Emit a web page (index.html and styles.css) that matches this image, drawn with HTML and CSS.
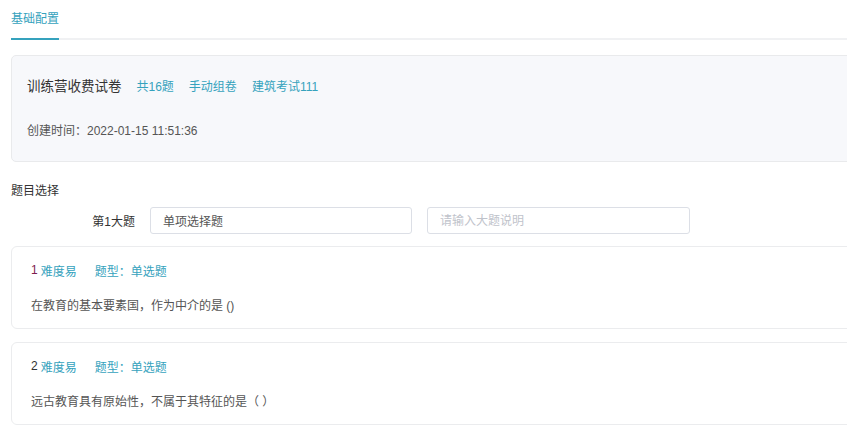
FILE: index.html
```html
<!DOCTYPE html>
<html lang="zh">
<head>
<meta charset="utf-8">
<link rel="stylesheet" href="styles.css">
</head>
<body>
<div class="page">
  <div class="tabs">
    <div class="tab active">基础配置</div>
  </div>

  <div class="info-card">
    <div class="info-title">
      <span class="paper-name">训练营收费试卷</span>
      <span class="tag">共16题</span>
      <span class="tag">手动组卷</span>
      <span class="tag">建筑考试111</span>
    </div>
    <div class="info-time">创建时间：2022-01-15 11:51:36</div>
  </div>

  <div class="section-title">题目选择</div>

  <div class="part-row">
    <div class="part-label">第1大题</div>
    <input class="part-input" type="text" value="单项选择题">
    <input class="part-input second" type="text" placeholder="请输入大题说明">
  </div>

  <div class="q-card">
    <div class="q-meta">
      <span class="q-num red">1</span>
      <span class="q-level">难度易</span>
      <span class="q-type">题型：单选题</span>
    </div>
    <div class="q-text">在教育的基本要素国，作为中介的是 ()</div>
  </div>

  <div class="q-card">
    <div class="q-meta">
      <span class="q-num">2</span>
      <span class="q-level">难度易</span>
      <span class="q-type">题型：单选题</span>
    </div>
    <div class="q-text">远古教育具有原始性，不属于其特征的是（ ）</div>
  </div>
</div>
</body>
</html>
```

FILE: styles.css
```css
html, body {
  margin: 0;
  padding: 0;
  background: #fff;
  overflow: hidden;
}
body {
  font-family: "Liberation Sans", "Noto Sans CJK SC", sans-serif;
  color: #333;
}
.page {
  padding-left: 11px;
  width: 900px;
}
.tabs {
  display: flex;
  height: 38px;
  border-bottom: 2px solid #f0f1f3;
}
.tab {
  font-size: 12px;
  line-height: 38px;
  color: #35a2bd;
  margin-bottom: -2px;
}
.tab.active {
  border-bottom: 2px solid #35a2bd;
  line-height: 38px;
  height: 38px;
}
.info-card {
  margin-top: 15px;
  height: 105px;
  background: #f7f8fb;
  border: 1px solid #e9eaec;
  border-radius: 5px;
  padding: 0 15px;
}
.info-title {
  display: flex;
  align-items: center;
  height: 24px;
  margin-top: 17px;
}
.paper-name {
  font-size: 13.5px;
  color: #333;
  margin-right: 15px;
}
.tag {
  font-size: 12px;
  color: #35a2bd;
  margin-right: 15px;
}
.info-time {
  margin-top: 24px;
  font-size: 12px;
  line-height: 20px;
  color: #555;
}
.section-title {
  margin-top: 19px;
  font-size: 12px;
  line-height: 20px;
  color: #333;
}
.part-row {
  display: flex;
  align-items: center;
  margin-top: 6px;
}
.part-label {
  width: 124px;
  text-align: right;
  font-size: 12px;
  color: #333;
  margin-right: 15px;
}
.part-input {
  box-sizing: border-box;
  width: 262px;
  height: 27px;
  border: 1px solid #dcdfe6;
  border-radius: 3px;
  padding: 0 12px;
  font-family: "Liberation Sans", "Noto Sans CJK SC", sans-serif;
  font-size: 12px;
  color: #555;
  outline: none;
  background: #fff;
}
.part-input.second {
  margin-left: 15px;
  width: 263px;
}
.part-input::placeholder {
  color: #bfc3cb;
}
.q-card {
  box-sizing: border-box;
  height: 83px;
  border: 1px solid #ebecee;
  border-radius: 6px;
  padding: 0 19px;
  margin-top: 12px;
}
.q-card + .q-card {
  margin-top: 13px;
}
.q-meta {
  display: flex;
  align-items: center;
  height: 20px;
  margin-top: 13px;
  font-size: 12px;
}
.q-num {
  color: #333;
  margin-right: 3px;
}
.q-num.red {
  color: #7d1d4f;
}
.q-level {
  color: #35a2bd;
  margin-right: 18px;
}
.q-type {
  color: #35a2bd;
}
.q-text {
  margin-top: 16px;
  font-size: 12px;
  line-height: 20px;
  color: #555;
}
```
